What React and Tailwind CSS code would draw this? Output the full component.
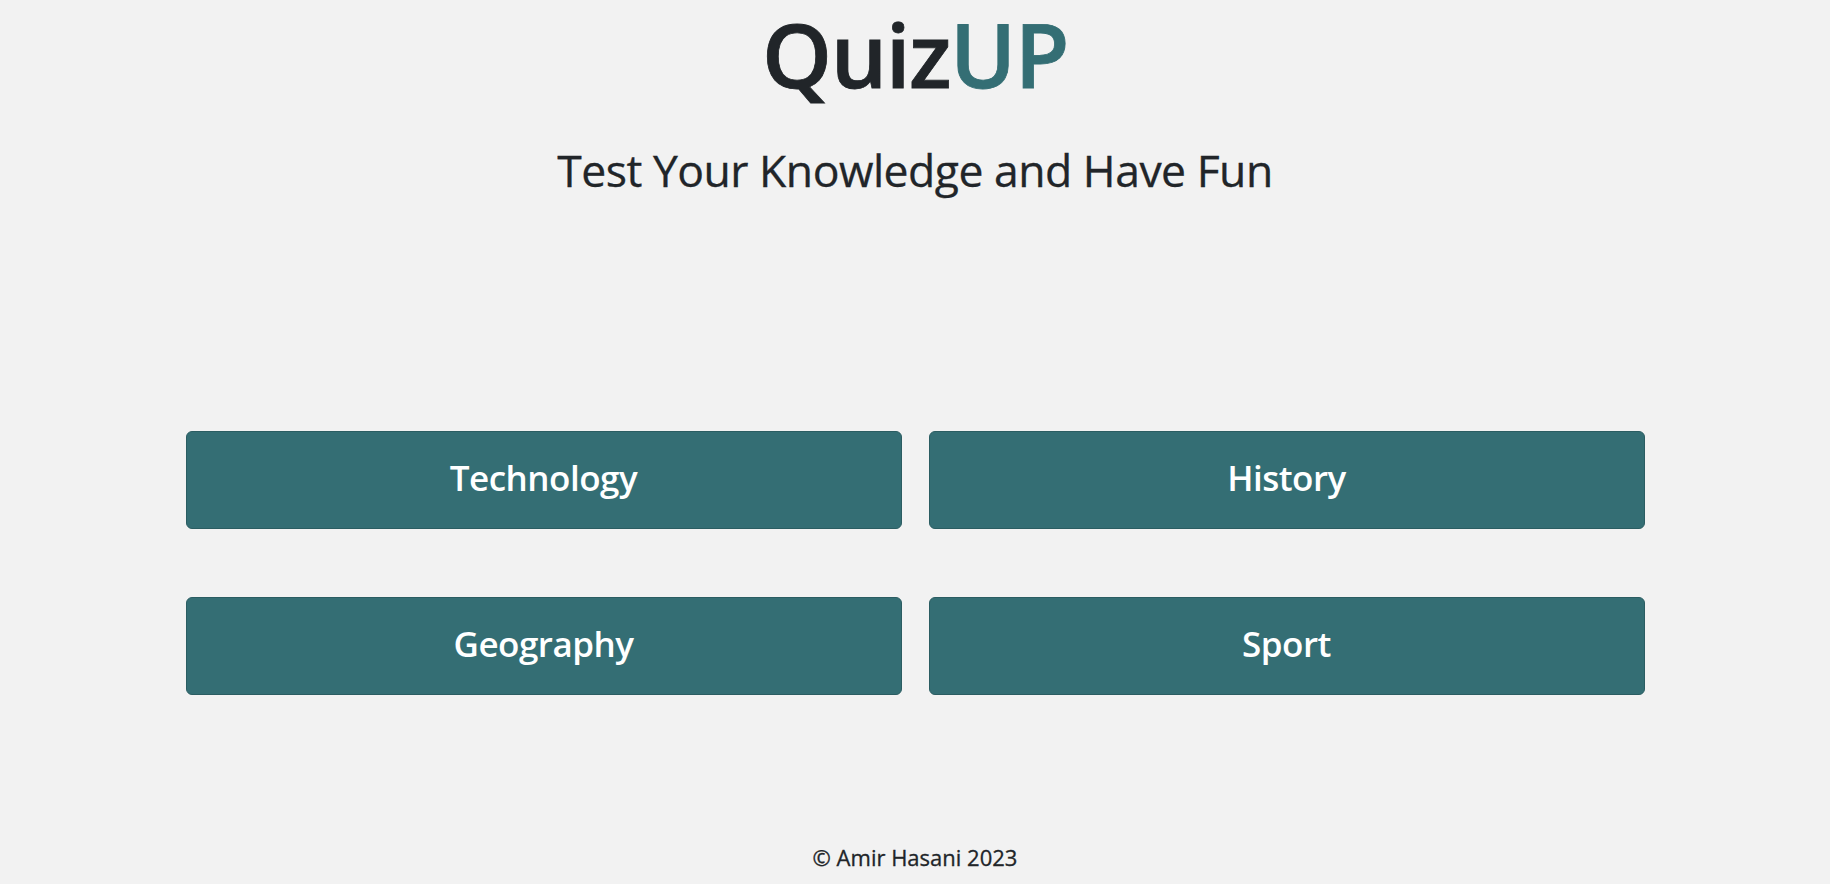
import React from 'react';

const categories = ['Technology', 'History', 'Geography', 'Sport'];

const App = () => {
  return (
    <div
      className="min-h-screen bg-[#f2f2f2] text-[#212529] flex flex-col items-center"
      style={{ fontFamily: '"Open Sans", "Noto Sans", sans-serif' }}
    >
      <h1 className="text-[89px] leading-[1.22] font-semibold tracking-[-1.5px] [-webkit-text-stroke-width:0.8px]">
        Quiz<span className="text-[#346e74]">UP</span>
      </h1>
      <h2 className="mt-[34px] text-[44.5px] leading-[1.2] font-medium tracking-[-0.5px] [-webkit-text-stroke-width:0.3px]">
        Test Your Knowledge and Have Fun
      </h2>

      <div className="mt-[235px] w-[1459px] grid grid-cols-2 gap-x-[27px] gap-y-[68px]">
        {categories.map((cat) => (
          <button
            key={cat}
            className="h-[98px] pb-[3px] rounded-[6px] bg-[#346e74] border border-[#2b5d62] text-white text-[35px] font-semibold leading-[1.2] tracking-[-0.5px]"
          >
            {cat}
          </button>
        ))}
      </div>

      <footer className="mt-[146px] text-[22px] leading-[1.5] font-medium [-webkit-text-stroke-width:0.3px]">
        © Amir Hasani 2023
      </footer>
    </div>
  );
};

export default App;
